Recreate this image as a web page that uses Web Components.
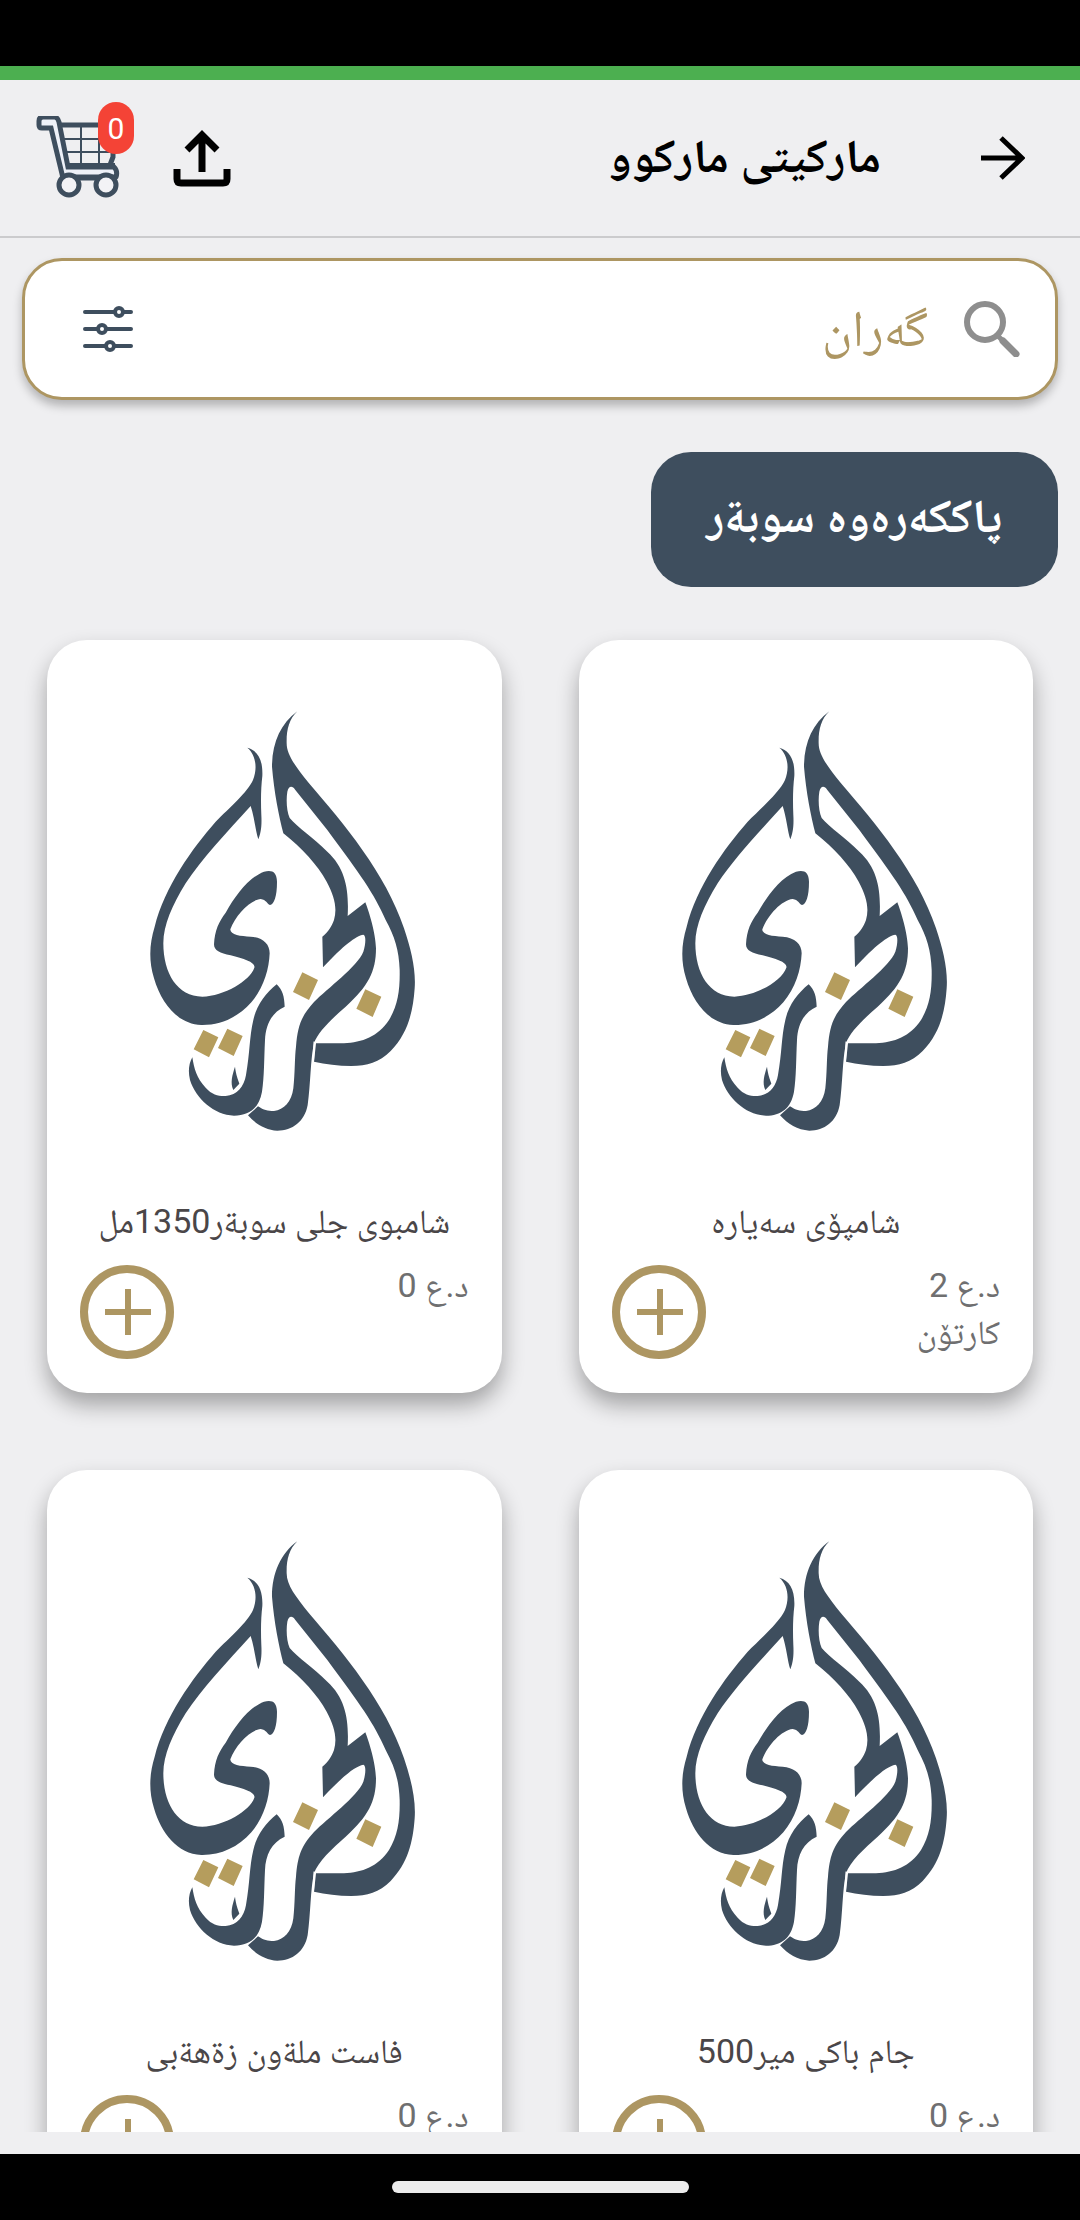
<!DOCTYPE html>
<html lang="ckb" dir="rtl">
<head>
  <meta charset="utf-8">
  <meta name="viewport" content="width=device-width, initial-scale=1">
  <title>مارکیتی مارکوو</title>
  <style>
    html,
    body {
      height: 100%;
      margin: 0;
    }

    body {
      --navy: #3e4e5e;
      --gold: #ad9662;
      --page: #efeff1;
      background: #000;
      font-family: Roboto, "Noto Naskh Arabic", "Noto Naskh Arabic UI", "DejaVu Sans", sans-serif;
    }
  </style>
</head>
<body>
  <market-app>
    <market-header slot="header" count="0">مارکیتی مارکوو</market-header>
    <search-bar slot="header" placeholder="گەران"></search-bar>
    <category-chip slot="header">پاککەرەوە سوبةر</category-chip>
    <product-card price="د.ع 2" unit="کارتۆن">شامپۆی سەیارە</product-card>
    <product-card price="د.ع 0">شامبوی جلی سوبةر1350مل</product-card>
    <product-card price="د.ع 0">جام باکی میر500</product-card>
    <product-card price="د.ع 0">فاست ملةون زةهةبی</product-card>
  </market-app>

  <script>
    class MarketApp extends HTMLElement {
      constructor() {
        super();
        this.attachShadow({ mode: "open" });
      }

      connectedCallback() {
        this.shadowRoot.innerHTML = `
          <style>
            :host {
              display: flex;
              flex-direction: column;
              height: 100%;
              background: var(--page);
            }

            .status {
              flex: none;
              height: 66px;
              background: #000;
              border-bottom: 14px solid #4caf50;
            }

            .list {
              flex: 1;
              min-height: 0;
              overflow: hidden;
              display: grid;
              grid-template-columns: 1fr 1fr;
              align-content: start;
              gap: 77px;
              padding: 53px 47px 0;
              margin-bottom: 22px;
            }

            .nav {
              flex: none;
              height: 66px;
              background: #000;
              display: flex;
              align-items: center;
              justify-content: center;
            }

            .pill {
              width: 297px;
              height: 12px;
              border-radius: 6px;
              background: #ececec;
            }
          </style>

          <div class="status"></div>
          <slot name="header"></slot>
          <main class="list"><slot></slot></main>
          <div class="nav"><div class="pill"></div></div>
        `;
      }
    }

    class MarketHeader extends HTMLElement {
      constructor() {
        super();
        this.attachShadow({ mode: "open" });
      }

      connectedCallback() {
        const count = this.getAttribute("count") || "0";

        this.shadowRoot.innerHTML = `
          <style>
            :host {
              flex: none;
              display: flex;
              align-items: center;
              height: 156px;
              padding: 0 44px 0 36px;
              border-bottom: 2px solid #cbcbcd;
            }

            button {
              display: block;
              padding: 0;
              border: 0;
              background: none;
              color: #000;
              font: inherit;
            }

            svg {
              display: block;
            }

            .back {
              margin-inline: 11px 100px;
            }

            h1 {
              flex: 1;
              margin: 0;
              padding-bottom: 4px;
              font-size: 47px;
              line-height: 56px;
              font-weight: 700;
            }

            .cart {
              position: relative;
              margin-inline-start: 40px;
            }

            .badge {
              position: absolute;
              top: -14px;
              right: -1px;
              width: 36px;
              height: 52px;
              border-radius: 18px;
              background: #f44336;
              color: #fff;
              font-size: 30px;
              line-height: 54px;
              text-align: center;
            }
          </style>

          <button class="back" aria-label="گەڕانەوە">
            <svg width="44" height="44" viewBox="0 0 44 44" fill="none" stroke="#000" stroke-width="5">
              <path d="M0 22H41M20 2L41 22L20 42"/>
            </svg>
          </button>
          <h1><slot></slot></h1>
          <button aria-label="هاوبەشکردن">
            <svg width="58" height="58" viewBox="0 0 58 58" fill="none" stroke="#000" stroke-width="7">
              <path d="M29 43V5M14 21L29 6L44 21M4 40V50Q4 54 8 54H50Q54 54 54 50V40"/>
            </svg>
          </button>
          <button class="cart" aria-label="سەبەتە">
            <svg width="97" height="84" viewBox="0 0 97 84" fill="none" stroke="var(--navy)" stroke-width="5">
              <path d="M24 9H77V41L74 49" stroke-width="5"/>
              <path d="M26 23H77M28 36H77M45 9V49M63 9V49" stroke-width="2"/>
              <path d="M3 5Q3 1 7 1H19Q22 2 23 6L32 51H78Q82 55 80 61Q79 62 76 62H27L15 12H6Q3 12 3 9Z" fill="#eef1f8"/>
              <path d="M31 50H79" stroke-width="6"/>
              <path d="M27 61H79" stroke-width="5"/>
              <circle cx="33" cy="69" r="10" fill="#f3f3f6"/>
              <circle cx="70" cy="69" r="10" fill="#f3f3f6"/>
            </svg>
            <span class="badge">${count}</span>
          </button>
        `;
      }
    }

    class SearchBar extends HTMLElement {
      constructor() {
        super();
        this.attachShadow({ mode: "open" });
      }

      connectedCallback() {
        const placeholder = this.getAttribute("placeholder") || "";

        this.shadowRoot.innerHTML = `
          <style>
            :host {
              flex: none;
              display: flex;
              align-items: center;
              box-sizing: border-box;
              height: 142px;
              margin: 20px 22px 0;
              padding: 0 35px 0 58px;
              background: #fff;
              border: 3px solid var(--gold);
              border-radius: 40px;
              box-shadow: 0 6px 10px rgba(0, 0, 0, 0.25);
            }

            svg {
              display: block;
            }

            input {
              flex: 1;
              min-width: 0;
              margin: 0 36px;
              padding: 0;
              border: 0;
              outline: 0;
              background: none;
              font: inherit;
              font-size: 51px;
              line-height: 80px;
              color: var(--gold);
            }

            input::placeholder {
              color: var(--gold);
              opacity: 1;
            }

            button {
              padding: 0;
              border: 0;
              background: none;
            }
          </style>

          <label for="q" aria-label="${placeholder}">
            <svg width="56" height="56" viewBox="0 0 56 56" fill="none" stroke="#8e8e8e">
              <circle cx="21" cy="21" r="18" stroke-width="6"/>
              <path d="M34 35L38 39" stroke-width="5"/>
              <path d="M39 40L52 53" stroke-width="7" stroke-linecap="round"/>
            </svg>
          </label>
          <input id="q" type="text" placeholder="${placeholder}">
          <button aria-label="پاڵاوتن">
            <svg width="50" height="46" viewBox="0 0 50 46" fill="#fff" stroke="var(--navy)" stroke-width="4" stroke-linecap="round">
              <path d="M2 6H48M2 23H48M2 40H48"/>
              <circle cx="36" cy="6" r="4"/>
              <circle cx="19" cy="23" r="4"/>
              <circle cx="27" cy="40" r="4"/>
            </svg>
          </button>
        `;
      }
    }

    class CategoryChip extends HTMLElement {
      constructor() {
        super();
        this.attachShadow({ mode: "open" });
      }

      connectedCallback() {
        this.shadowRoot.innerHTML = `
          <style>
            :host {
              flex: none;
              display: flex;
              margin: 52px 22px 0;
            }

            button {
              height: 135px;
              padding: 0 56px 8px;
              border: 0;
              border-radius: 40px;
              background: var(--navy);
              color: #fff;
              font: inherit;
              font-size: 47px;
              line-height: 56px;
              font-weight: 700;
            }
          </style>

          <button><slot></slot></button>
        `;
      }
    }

    class ProductCard extends HTMLElement {
      constructor() {
        super();
        this.attachShadow({ mode: "open" });
      }

      connectedCallback() {
        const price = this.getAttribute("price") || "";
        const unit = this.getAttribute("unit") || "";

        this.shadowRoot.innerHTML = `
          <style>
            :host {
              display: flex;
              flex-direction: column;
              align-items: center;
              padding: 60px 33px 33px;
              background: #fff;
              border-radius: 40px;
              box-shadow: 0 12px 22px rgba(0, 0, 0, 0.32);
            }

            svg {
              display: block;
            }

            h2 {
              margin: 47px 0 0;
              font-size: 34px;
              line-height: 48px;
              font-weight: 400;
              color: #4a4648;
              white-space: nowrap;
            }

            .foot {
              align-self: stretch;
              display: flex;
              justify-content: space-between;
              align-items: flex-end;
              margin-top: 17px;
            }

            p {
              height: 98px;
              margin: 0;
              font-size: 34px;
              line-height: 47px;
              color: #6f6f70;
            }

            button {
              padding: 0;
              border: 0;
              background: none;
            }
          </style>

          <svg width="294" height="450" viewBox="-1 0 882 1350" fill="var(--navy)">
            <path d="M360 143C392 152 407 180 405 228C401 262 400 300 402 345C404 380 400 400 393 418C385 395 381 350 370 318C300 395 222 478 175 550C135 615 108 675 108 730C108 820 150 890 225 890C290 888 368 842 381 803C386 788 350 776 310 766C278 760 260 752 260 733C262 690 275 665 295 638C325 585 365 532 410 515C435 509 448 516 449 545C449 590 440 613 428 615C419 612 417 599 400 597C368 600 325 645 309 688C308 705 340 709 370 710C407 713 427 732 427 760C425 810 408 865 372 907C332 952 280 976 222 975C150 972 102 910 80 835C63 780 67 728 82 680C112 560 195 445 265 365C305 325 362 275 377 240C391 205 386 165 360 143Z"/>
            <path d="M510 34C485 58 477 90 478 130C478 165 505 200 545 250C650 372 775 520 830 685C852 750 866 810 862 865C857 935 842 1000 790 1053C755 1088 720 1098 672 1098C632 1098 595 1092 560 1085L566 1030L650 1030C705 1027 752 1010 785 960C812 915 818 870 817 810C815 750 802 710 775 660C740 580 700 525 600 390L504 270C495 256 484 257 480 275C476 300 478 335 487 354C510 382 560 415 600 455C655 505 665 570 661 648L714 607C725 635 745 700 746 745C746 815 722 860 655 920C615 955 572 995 560 1030C549 1080 550 1150 541 1215C532 1265 495 1292 450 1292C415 1290 385 1272 362 1246L392 1219C410 1231 420 1233 440 1233C470 1230 493 1205 498 1165C503 1120 502 1070 506 1040C511 980 520 950 560 906C600 865 690 800 708 755C716 730 716 705 708 704C685 708 650 735 587 802L585 710C605 694 612 680 620 660C630 625 622 590 598 545C570 495 525 445 468 400C455 350 440 275 434 200C434 130 460 70 510 34Z"/>
            <path d="M448 853C466 870 471 890 472 920C432 938 415 975 413 1020C410 1080 411 1130 404 1175C395 1225 365 1247 320 1247C260 1245 205 1195 188 1140C182 1115 184 1092 195 1072C200 1105 208 1135 235 1163C255 1185 275 1189 295 1188C330 1185 350 1160 356 1125C368 1060 366 1010 378 960C388 915 415 880 448 853Z"/>
            <path d="M323 1100C326 1125 332 1138 336 1151L318 1170C308 1148 315 1125 323 1100Z"/>
            <path d="M561 1025L557 1092" stroke="#fff" stroke-width="5"/>
            <path fill="#b59d5d" d="M525 817L572 840L545 900L497 876ZM714 868L762 890L736 951L687 926ZM228 990L273 1012L245 1072L199 1048ZM300 986L346 1008L319 1068L272 1044Z"/>
          </svg>
          <h2><slot></slot></h2>
          <div class="foot">
            <p>${price}${unit ? `<br>${unit}` : ""}</p>
            <button aria-label="زیادکردن">
              <svg width="95" height="95" viewBox="0 0 95 95" fill="none" stroke="var(--gold)">
                <circle cx="47" cy="47" r="43" stroke-width="8"/>
                <path d="M25 47H71M48 24V70" stroke-width="6"/>
              </svg>
            </button>
          </div>
        `;
      }
    }

    customElements.define("market-app", MarketApp);
    customElements.define("market-header", MarketHeader);
    customElements.define("search-bar", SearchBar);
    customElements.define("category-chip", CategoryChip);
    customElements.define("product-card", ProductCard);
  </script>
</body>
</html>
